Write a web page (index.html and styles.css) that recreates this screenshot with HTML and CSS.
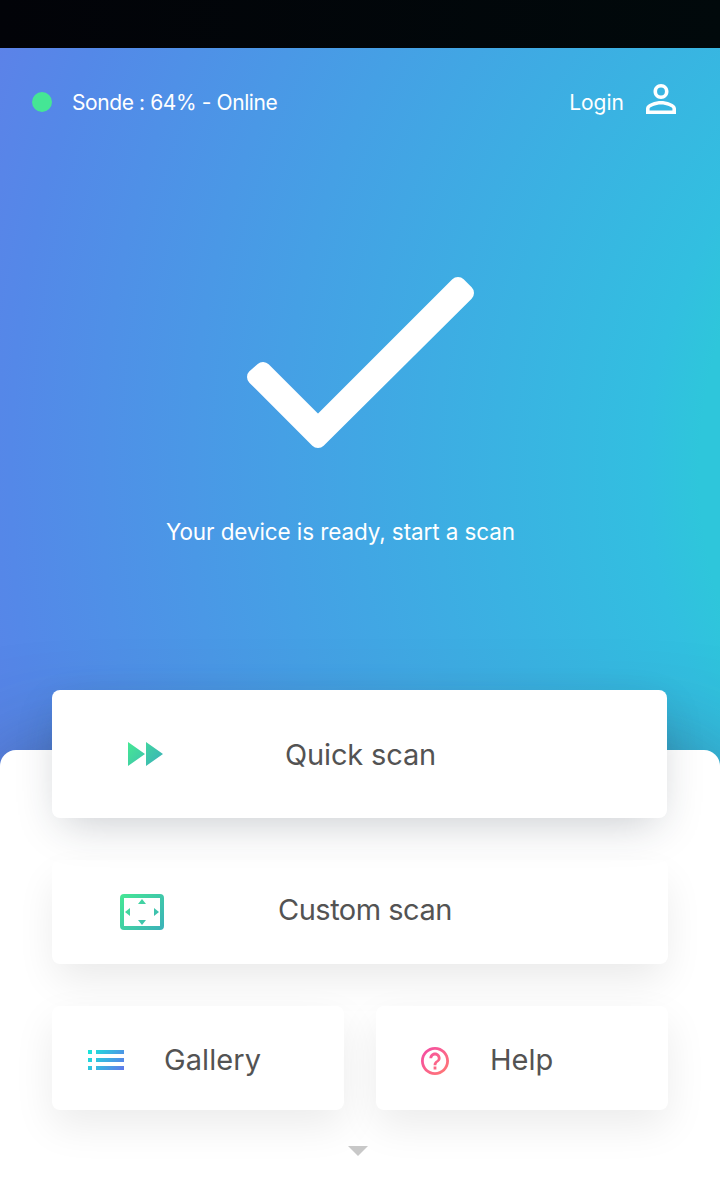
FILE: index.html
```html
<!DOCTYPE html>
<html lang="en">
<head>
<meta charset="utf-8">
<title>Sonde</title>
<link rel="stylesheet" href="styles.css">
</head>
<body>
<div class="app">
  <div class="status-bar"></div>
  <header class="topbar">
    <span class="dot"></span>
    <span class="device">Sonde : 64% - Online</span>
    <span class="login">Login</span>
    <svg class="user" viewBox="4 4 16 16"><path fill="#fff" d="M12 5.9a2.1 2.1 0 1 1 0 4.2 2.1 2.1 0 0 1 0-4.2m0 9c2.97 0 6.1 1.46 6.1 2.1v1.1H5.9V17c0-.64 3.13-2.1 6.1-2.1M12 4C9.79 4 8 5.79 8 8s1.79 4 4 4 4-1.79 4-4-1.79-4-4-4zm0 9c-2.67 0-8 1.34-8 4v3h16v-3c0-2.66-5.33-4-8-4z"/></svg>
  </header>
  <section class="hero">
    <svg class="check" viewBox="247 277 227 171"><path d="M263 370L318 425L458 285L466 293L318 440L255 377Z" fill="#fff" stroke="#fff" stroke-width="16" stroke-linejoin="round"/></svg>
    <p class="ready">Your device is ready, start a scan</p>
  </section>
  <main class="panel">
    <div class="card quick">
      <svg class="icon-quick" viewBox="0 0 35 24">
        <defs><linearGradient id="green-a" gradientUnits="userSpaceOnUse" x1="2" y1="0" x2="32" y2="24"><stop offset="0" stop-color="#45e695"/><stop offset="1" stop-color="#3bb2b8"/></linearGradient></defs>
        <path fill="url(#green-a)" d="M0 0L17 12L0 24ZM18 0L35 12L18 24Z"/>
      </svg>
      <span class="label">Quick scan</span>
    </div>
    <div class="card custom">
      <svg class="icon-custom" viewBox="0 0 44 36">
        <defs><linearGradient id="green-b" gradientUnits="userSpaceOnUse" x1="2" y1="0" x2="42" y2="36"><stop offset="0" stop-color="#45e695"/><stop offset="1" stop-color="#3bb2b8"/></linearGradient></defs>
        <rect x="2" y="2" width="40" height="32" rx="2" fill="none" stroke="url(#green-b)" stroke-width="4"/>
        <path fill="url(#green-b)" d="M22 5L26 10H18ZM22 31L18 26H26ZM5 18L10 14V22ZM39 18L34 14V22Z"/>
      </svg>
      <span class="label">Custom scan</span>
    </div>
    <div class="row">
      <div class="card gallery">
        <svg class="icon-list" viewBox="0 0 36 20">
          <defs><linearGradient id="blue" gradientUnits="userSpaceOnUse" x1="2" y1="-3" x2="34" y2="22"><stop offset="0" stop-color="#17ead9"/><stop offset="1" stop-color="#6078ea"/></linearGradient></defs>
          <path fill="url(#blue)" d="M0 0h4v4H0ZM8 0h28v4H8ZM0 8h4v4H0ZM8 8h28v4H8ZM0 16h4v4H0ZM8 16h28v4H8Z"/>
        </svg>
        <span class="label">Gallery</span>
      </div>
      <div class="card help">
        <svg class="icon-help" viewBox="2 2 20 20">
          <defs><linearGradient id="pink" gradientUnits="userSpaceOnUse" x1="4" y1="4" x2="20" y2="20"><stop offset="0" stop-color="#f54ea2"/><stop offset="1" stop-color="#ff7676"/></linearGradient></defs>
          <path fill="url(#pink)" d="M11 18h2v-2h-2v2zm1-16C6.48 2 2 6.48 2 12s4.48 10 10 10 10-4.48 10-10S17.52 2 12 2zm0 18c-4.41 0-8-3.59-8-8s3.59-8 8-8 8 3.59 8 8-3.59 8-8 8zm0-14c-2.21 0-4 1.79-4 4h2c0-1.1.9-2 2-2s2 .9 2 2c0 2-3 1.75-3 5h2c0-2.25 3-2.5 3-5 0-2.21-1.79-4-4-4z"/>
        </svg>
        <span class="label">Help</span>
      </div>
    </div>
    <svg class="more" viewBox="0 0 20 10"><path fill="#c8c8c8" d="M0 0H20L10 10Z"/></svg>
  </main>
</div>
</body>
</html>
```
FILE: styles.css
```css
* { box-sizing: border-box; }
body { margin: 0; font-family: Inter, "Liberation Sans", sans-serif; }
svg { display: block; flex: none; }
.app {
  width: 720px;
  height: 1180px;
  overflow: hidden;
  display: flex;
  flex-direction: column;
  background: radial-gradient(circle at 1140px 470px, #2ec6db 440px, #32bfe0 492px, #45a0e5 858px, #5488e8 1130px, #5c82e8 1220px);
}
.status-bar { height: 48px; flex: none; background: linear-gradient(90deg, #020308, #01090b); }
.topbar {
  display: flex;
  align-items: center;
  height: 108px;
  padding: 0 44px 0 32px;
  color: #fff;
  font-size: 21px;
}
.dot { width: 20px; height: 20px; border-radius: 50%; background: #45e695; }
.device { margin: 1px 0 0 20px; letter-spacing: -.4px; white-space: nowrap; }
.login { margin: 1px 22px 0 auto; }
.user { width: 30px; height: 30px; margin-top: -6px; }
.hero { height: 594px; flex: none; padding-top: 121px; }
.check { width: 227px; height: 171px; margin-left: 247px; }
.ready {
  margin: 69px 0 0 166px;
  color: #fff;
  font-size: 22.5px;
  line-height: 30px;
  letter-spacing: -.1px;
  white-space: nowrap;
}
.panel {
  height: 430px;
  flex: none;
  padding: 0 52px;
  border-radius: 16px 16px 0 0;
  background: #fff;
  box-shadow: 0 10px 110px -10px rgba(50, 50, 73, .7);
}
.card {
  display: flex;
  align-items: center;
  height: 104px;
  border-radius: 8px;
  background: #fff;
  color: #535353;
  font-size: 29px;
  box-shadow: 0 16px 40px rgba(0, 0, 0, .08);
}
.label { white-space: nowrap; }
.quick { position: relative; width: 615px; height: 128px; margin-top: -60px; box-shadow: 0 14px 44px -10px rgba(33, 43, 60, .25); }
.custom { margin-top: 42px; box-shadow: 0 18px 40px -4px rgba(0, 0, 0, .09); }
.row { display: grid; grid-template-columns: 1fr 1fr; gap: 32px; margin-top: 42px; }
.icon-quick { width: 35px; height: 24px; margin-left: 76px; }
.quick .label { margin-left: 122px; letter-spacing: -.15px; }
.icon-custom { width: 44px; height: 36px; margin-left: 68px; }
.custom .label { margin: -6px 0 0 114px; letter-spacing: -.5px; }
.icon-list { width: 36px; height: 20px; margin: 4px 0 0 36px; }
.gallery .label { margin: 2px 0 0 40px; letter-spacing: .1px; }
.icon-help { width: 28px; height: 28px; margin: 6px 0 0 45px; }
.help .label { margin: 2px 0 0 41px; }
.more { width: 20px; height: 10px; margin: 36px 0 0 296px; }
```
